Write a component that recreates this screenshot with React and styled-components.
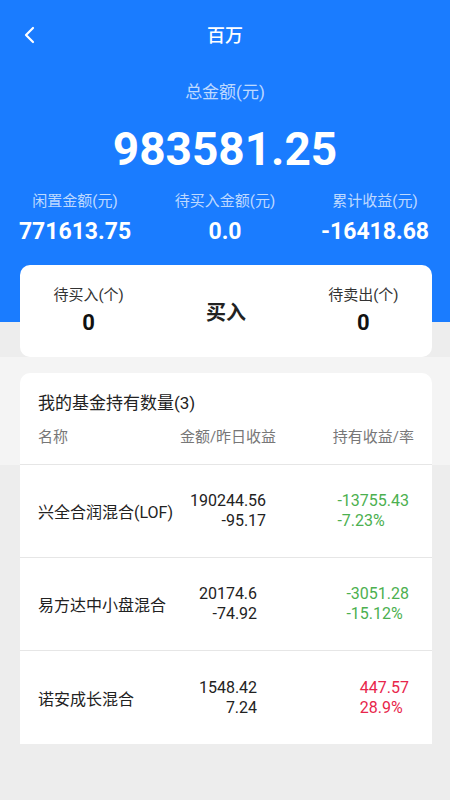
import React from 'react';
import styled, { createGlobalStyle } from 'styled-components';

const GlobalStyle = createGlobalStyle`
  body {
    margin: 0;
    font-family: Roboto, "Noto Sans CJK SC", sans-serif;
    background: #ededed;
  }
`;

const Page = styled.div`
  width: 450px;
  min-height: 800px;
  background: #ededed;
`;

const Header = styled.div`
  background: #1a7cff;
  color: #fff;
  padding-bottom: 76px;
`;

const TopBar = styled.div`
  height: 68px;
  padding-bottom: 2px;
  display: flex;
  align-items: center;
  justify-content: center;
  position: relative;
`;

const Back = styled.div`
  position: absolute;
  left: 22px;
  top: 26px;
  width: 16px;
  height: 18px;
  display: flex;
`;

const Title = styled.div`
  font-size: 18px;
  font-weight: 500;
`;

const TotalLabel = styled.div`
  margin-top: 11px;
  text-align: center;
  font-size: 17px;
  line-height: 22px;
  color: rgba(255, 255, 255, 0.72);
`;

const TotalValue = styled.div`
  margin-top: 18px;
  text-align: center;
  font-size: 46px;
  line-height: 56px;
  font-weight: 700;
`;

const Stats = styled.div`
  margin-top: 14px;
  display: grid;
  grid-template-columns: repeat(3, 1fr);
`;

const Stat = styled.div`
  display: flex;
  flex-direction: column;
  align-items: center;
  gap: 7px;
`;

const StatLabel = styled.div`
  font-size: 15px;
  line-height: 20px;
  color: rgba(255, 255, 255, 0.72);
`;

const StatValue = styled.div`
  font-size: 23px;
  line-height: 28px;
  font-weight: 700;
`;

const BuyCard = styled.div`
  margin: -57px 18px 0 20px;
  height: 92px;
  box-sizing: border-box;
  background: #fff;
  border-radius: 10px;
  display: grid;
  grid-template-columns: repeat(3, 1fr);
  padding-top: 20px;
`;

const BuyCol = styled.div`
  display: flex;
  flex-direction: column;
  align-items: center;
  gap: 4px;
`;

const BuyLabel = styled.div`
  font-size: 15px;
  line-height: 20px;
  color: #333;
`;

const BuyValue = styled.div`
  font-size: 22px;
  line-height: 28px;
  font-weight: 700;
  color: #111;
`;

const BuyButton = styled.div`
  align-self: start;
  margin-top: 16px;
  text-align: center;
  font-size: 20px;
  line-height: 24px;
  font-weight: 700;
  color: #222;
`;

const Section = styled.div`
  background: #f4f4f4;
  padding: 16px 18px 0 20px;
`;

const HoldCard = styled.div`
  background: #fff;
  border-radius: 10px 10px 0 0;
  padding: 18px 0 0;
  height: 92px;
  box-sizing: border-box;
  border-bottom: 1px solid #e6e6e6;
`;

const HoldTitle = styled.div`
  padding-left: 18px;
  font-size: 17px;
  line-height: 24px;
  color: #222;
`;

const Grid = styled.div`
  display: grid;
  grid-template-columns: 125px 130px 1fr;
  padding: 0 18px;
  align-items: center;
`;

const HeadRow = styled(Grid)`
  margin-top: 12px;
  font-size: 15px;
  line-height: 20px;
  color: #777;
`;

const HeadCell = styled.div`
  text-align: ${p => p.align || 'left'};
  white-space: nowrap;
`;

const List = styled.div`
  margin: 0 18px 0 20px;
`;

const Row = styled(Grid)`
  height: 93px;
  box-sizing: border-box;
  background: #fff;
  border-bottom: ${p => (p.last ? 'none' : '1px solid #e6e6e6')};
`;

const Name = styled.div`
  font-size: 16px;
  color: #222;
  white-space: nowrap;
`;

const Amount = styled.div`
  justify-self: center;
  text-align: right;
  font-size: 16px;
  line-height: 20px;
  color: #222;
`;

const Profit = styled.div`
  justify-self: end;
  margin-right: 5px;
  text-align: left;
  font-size: 16px;
  line-height: 20px;
  color: ${p => (p.up ? '#e8264b' : '#4cb04f')};
`;

const funds = [
  { name: '兴全合润混合(LOF)', amount: '190244.56', day: '-95.17', profit: '-13755.43', rate: '-7.23%', up: false },
  { name: '易方达中小盘混合', amount: '20174.6', day: '-74.92', profit: '-3051.28', rate: '-15.12%', up: false },
  { name: '诺安成长混合', amount: '1548.42', day: '7.24', profit: '447.57', rate: '28.9%', up: true },
];

export default function App() {
  return (
    <Page>
      <GlobalStyle />
      <Header>
        <TopBar>
          <Back>
            <svg width="16" height="18" viewBox="0 0 16 18">
              <polyline points="11,2 4,9 11,16" fill="none" stroke="#fff" strokeWidth="2.2" strokeLinecap="round" strokeLinejoin="round" />
            </svg>
          </Back>
          <Title>百万</Title>
        </TopBar>
        <TotalLabel>总金额(元)</TotalLabel>
        <TotalValue>983581.25</TotalValue>
        <Stats>
          <Stat>
            <StatLabel>闲置金额(元)</StatLabel>
            <StatValue>771613.75</StatValue>
          </Stat>
          <Stat>
            <StatLabel>待买入金额(元)</StatLabel>
            <StatValue>0.0</StatValue>
          </Stat>
          <Stat>
            <StatLabel>累计收益(元)</StatLabel>
            <StatValue>-16418.68</StatValue>
          </Stat>
        </Stats>
      </Header>
      <BuyCard>
        <BuyCol>
          <BuyLabel>待买入(个)</BuyLabel>
          <BuyValue>0</BuyValue>
        </BuyCol>
        <BuyButton>买入</BuyButton>
        <BuyCol>
          <BuyLabel>待卖出(个)</BuyLabel>
          <BuyValue>0</BuyValue>
        </BuyCol>
      </BuyCard>
      <Section>
        <HoldCard>
          <HoldTitle>我的基金持有数量(3)</HoldTitle>
          <HeadRow>
            <HeadCell>名称</HeadCell>
            <HeadCell align="center">金额/昨日收益</HeadCell>
            <HeadCell align="right">持有收益/率</HeadCell>
          </HeadRow>
        </HoldCard>
      </Section>
      <List>
        {funds.map((f, i) => (
          <Row key={f.name} last={i === funds.length - 1}>
            <Name>{f.name}</Name>
            <Amount>
              <div>{f.amount}</div>
              <div>{f.day}</div>
            </Amount>
            <Profit up={f.up}>
              <div>{f.profit}</div>
              <div>{f.rate}</div>
            </Profit>
          </Row>
        ))}
      </List>
    </Page>
  );
}
